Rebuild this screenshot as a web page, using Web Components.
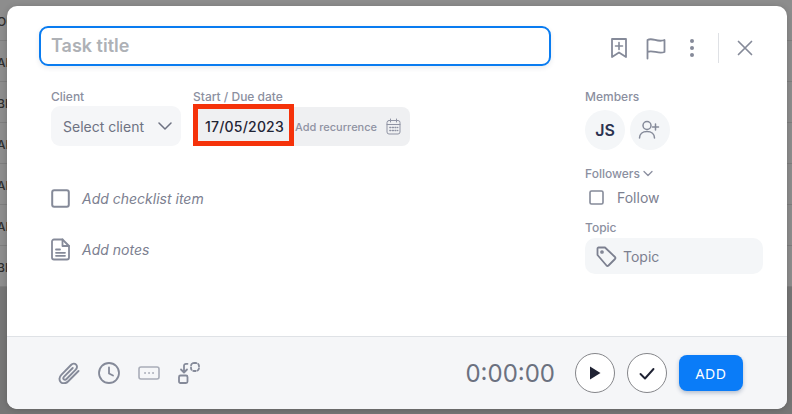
<!DOCTYPE html>
<html>
<head>
<meta charset="utf-8">
<style>
  html, body { margin: 0; padding: 0; overflow: hidden; }
  body { font-family: Inter, "Liberation Sans", sans-serif; }
</style>
</head>
<body>
<task-page></task-page>

<script>
// small wrapper so the stroke icons all share the same svg setup
const icon = (w, h, body, extra = '') =>
    `<svg width="${w}" height="${h}" viewBox="0 0 ${w} ${h}" fill="none" stroke="currentColor" stroke-linecap="round" stroke-linejoin="round" ${extra}>${body}</svg>`;

class BackdropTable extends HTMLElement {
    constructor() {
        super();
        this.attachShadow({ mode: 'open' });
        const labels = ['OC', 'AR', 'BE', 'AR', 'AR', 'AR', 'BE'];
        this.shadowRoot.innerHTML = `
            <style>
                :host { display: block; width: 792px; height: 414px; background: #767676; overflow: hidden; }
                .row {
                    height: 40px;
                    border-bottom: 1px solid #7e7e7e;
                    background: #8d8d8d;
                    color: #2e2e2e;
                    font: 500 12px/43px Inter, sans-serif;
                    white-space: nowrap;
                    overflow: hidden;
                    text-indent: -3px;
                }
                .row:first-child {
                    height: 41px;
                    line-height: 41px;
                    background: linear-gradient(#8e8e8e 0, #8c8c8c 60%, #808080 100%);
                }
            </style>
            ${labels.map(l => `<div class="row">${l}</div>`).join('')}
        `;
    }
}

class FieldLabel extends HTMLElement {
    constructor() {
        super();
        this.attachShadow({ mode: 'open' });
        this.shadowRoot.innerHTML = `
            <style>
                :host { display: flex; align-items: center; gap: 3px; height: 16px; font-size: 12px; font-weight: 500; color: #8b8f9f; }
            </style>
            <slot></slot>
        `;
    }
}

class IconAction extends HTMLElement {
    constructor() {
        super();
        this.attachShadow({ mode: 'open' });
        this.shadowRoot.innerHTML = `
            <style>
                :host { display: flex; align-items: center; justify-content: center; color: #858a99; }
                ::slotted(svg) { display: block; }
            </style>
            <slot></slot>
        `;
    }
}

class RoundButton extends HTMLElement {
    constructor() {
        super();
        this.attachShadow({ mode: 'open' });
        this.shadowRoot.innerHTML = `
            <style>
                :host {
                    display: flex; align-items: center; justify-content: center;
                    width: 40px; height: 40px; box-sizing: border-box;
                    border-radius: 50%; border: 1px solid #85868a;
                    background: #fff; color: #1f2233;
                }
            </style>
            <slot></slot>
        `;
    }
}

class MemberBubble extends HTMLElement {
    constructor() {
        super();
        this.attachShadow({ mode: 'open' });
        this.shadowRoot.innerHTML = `
            <style>
                :host {
                    display: flex; align-items: center; justify-content: center;
                    width: 40px; height: 40px; border-radius: 50%;
                    background: #f4f6f8; color: #2b3350;
                    font-size: 16px; font-weight: 600;
                }
            </style>
            <slot></slot>
        `;
    }
}

class CheckRow extends HTMLElement {
    constructor() {
        super();
        this.attachShadow({ mode: 'open' });
        this.shadowRoot.innerHTML = `
            <style>
                :host { display: flex; align-items: center; color: #7c8090; font-size: 14px; }
                .lead { flex: none; display: flex; align-items: center; color: #858a99; }
            </style>
            <span class="lead"><slot name="lead"></slot></span>
            <slot></slot>
        `;
    }
}

class DateField extends HTMLElement {
    constructor() {
        super();
        this.attachShadow({ mode: 'open' });
        this.shadowRoot.innerHTML = `
            <style>
                :host { display: block; position: relative; width: 217px; height: 39px; margin-top: 1px; background: #eff0f2; border-radius: 0 8px 8px 0; }
                .inner { display: flex; align-items: center; height: 100%; }
                .date { margin-left: 12px; width: 90px; font-size: 14px; font-weight: 500; letter-spacing: .2px; color: #1f2435; white-space: nowrap; }
                .rec { font-size: 11px; font-weight: 500; color: #8f93a3; white-space: nowrap; }
                .cal { margin-left: 9px; color: #8f93a3; display: flex; }
                /* red annotation drawn on top of the field */
                .mark { position: absolute; left: 0; top: -3px; width: 101px; height: 42px; box-sizing: border-box; border: 5px solid #f5320a; }
            </style>
            <div class="inner">
                <span class="date"><slot></slot></span>
                <span class="rec">Add recurrence</span>
                <span class="cal">${icon(15, 17, `
                    <rect x="1" y="2.5" width="13" height="13.5" rx="2"/>
                    <path d="M1 6.5h13M4.5 1v3M10.5 1v3"/>
                    <path stroke-width="1.3" stroke-dasharray="1 1.6" d="M3.8 9.5h8M3.8 12.5h8"/>`)}</span>
            </div>
            <div class="mark"></div>
        `;
    }
}

class TaskModal extends HTMLElement {
    constructor() {
        super();
        this.attachShadow({ mode: 'open' });
        this.shadowRoot.innerHTML = `
            <style>
                :host {
                    position: absolute; left: 7px; top: 6px;
                    display: flex; flex-direction: column;
                    width: 780px; height: 403px;
                    background: #fff; border-radius: 10px; overflow: hidden;
                    color: #7c8090;
                    box-shadow: 0 1px 6px rgba(0, 0, 0, .18);
                    font-family: Inter, "Liberation Sans", sans-serif;
                }
                .main { flex: 1; display: flex; flex-direction: column; padding: 20px 24px 0 32px; }
                .head { display: flex; align-items: flex-start; height: 40px; }
                .title {
                    width: 512px; height: 40px; box-sizing: border-box;
                    border: 2px solid #0a7cf0; border-radius: 9px;
                    padding: 0 0 1px 10px; display: flex; align-items: center;
                    font-size: 18px; font-weight: 600; color: #aeb1b6;
                    box-shadow: 0 2px 5px rgba(40, 60, 90, .1);
                }
                .tools { display: flex; align-items: center; height: 44px; margin-left: 59px; }
                .sep { width: 1px; height: 30px; background: #dfe1e5; }
                .cols { display: flex; padding-left: 12px; margin-top: 22px; }
                .left { width: 534px; }
                .right { width: 178px; }
                .dates { display: flex; }
                .stack { display: flex; flex-direction: column; gap: 2px; }
                .select {
                    display: flex; align-items: center; justify-content: space-between;
                    width: 130px; height: 40px; box-sizing: border-box; padding: 0 9px 0 12px;
                    background: #f5f6f8; border-radius: 9px;
                    font-size: 14px; color: #6e7282;
                }
                .checks { display: flex; flex-direction: column; gap: 30px; margin-top: 43px; font-style: italic; }
                .members { display: flex; gap: 5px; margin-top: 6px; }
                .topic {
                    display: flex; align-items: center; gap: 6px; margin-top: 3px;
                    height: 36px; padding-left: 11px; border-radius: 10px;
                    background: #f4f6f8; font-size: 14px;
                }
                .topic span { margin-top: 1px; }
                .foot {
                    display: flex; align-items: center; height: 72px;
                    border-top: 1px solid #dfe2e6; background: #f5f6f8;
                    padding-left: 51px;
                }
                .foot-icons { display: flex; gap: 18px; color: #878c9b; }
                .timer { margin-left: auto; font: 400 24px Inter, sans-serif; color: #6b7180; }
                .round { display: flex; gap: 12px; margin-left: 20px; }
                .add {
                    display: flex; align-items: center; justify-content: center;
                    width: 64px; height: 36px; margin: 0 44px 0 12px;
                    background: #0a7cf8; border-radius: 8px; color: #fff;
                    font: 400 14px "Noto Sans", sans-serif; letter-spacing: .6px;
                    box-shadow: 0 2px 4px rgba(30, 60, 110, .3);
                }
            </style>
            <div class="main">
                <div class="head">
                    <div class="title">Task title</div>
                    <div class="tools">
                        <icon-action style="width:18px">${icon(18, 22, `
                            <path stroke-width="1.8" d="M2 2h14v18l-7-4.5L2 20z"/>
                            <path stroke-width="1.6" d="M9 5.5v7M5.5 9h7"/>`)}</icon-action>
                        <icon-action style="width:21px;margin-left:17px">${icon(21, 24, `
                            <path stroke-width="1.8" d="M2.500 22.500V4c5-3 10 3 17 0v12c-6 2.500-12-2.500-17 0"/>`)}</icon-action>
                        <icon-action style="width:6px;margin-left:23px"><svg width="6" height="20" viewBox="0 0 6 20" fill="currentColor"><circle cx="3" cy="3" r="2"/><circle cx="3" cy="10" r="2"/><circle cx="3" cy="17" r="2"/></svg></icon-action>
                        <div class="sep" style="margin-left:23px"></div>
                        <icon-action style="width:16px;margin-left:18px">${icon(16, 16, `
                            <path stroke-width="1.7" d="M1.500 1.500l13 13M14.500 1.500l-13 13"/>`)}</icon-action>
                    </div>
                </div>
                <div class="cols">
                    <div class="left">
                        <div class="dates">
                            <div class="stack">
                                <field-label>Client</field-label>
                                <div class="select">Select client ${icon(14, 10, `<path stroke-width="1.500" d="M1 2l6 6 6-6"/>`)}</div>
                            </div>
                            <div class="stack" style="margin-left:12px">
                                <field-label>Start / Due date</field-label>
                                <date-field>17/05/2023</date-field>
                            </div>
                        </div>
                        <div class="checks">
                            <check-row>
                                <span slot="lead" style="width:31px;display:flex">${icon(19, 19, `<rect x="1.200" y="1.200" width="16.600" height="16.600" rx="2" stroke-width="2"/>`)}</span>
                                Add checklist item
                            </check-row>
                            <check-row>
                                <span slot="lead" style="width:31px;display:flex">${icon(19, 23, `
                                    <path stroke-width="1.800" d="M11.500 1.500H3a2 2 0 0 0-2 2v16a2 2 0 0 0 2 2h13a2 2 0 0 0 2-2V8z"/>
                                    <path stroke-width="1.800" d="M11.500 1.500V8H18M5 11.500h4M5 14.800h9M5 17.800h9"/>`)}</span>
                                Add notes
                            </check-row>
                        </div>
                    </div>
                    <div class="right">
                        <field-label>Members</field-label>
                        <div class="members">
                            <member-bubble>JS</member-bubble>
                            <member-bubble style="color:#858a99"><span style="display:flex;margin-left:-2px">${icon(22, 22, `
                                <circle cx="9" cy="6.500" r="4" stroke-width="1.500"/>
                                <path stroke-width="1.500" d="M1.500 19c0-4 3-6.500 7.500-6.500s7.500 2.500 7.500 6.500M17.500 5v6M14.500 8h6"/>`)}</span></member-bubble>
                        </div>
                        <field-label style="margin-top:15px">Followers ${icon(10, 7, `<path stroke-width="1.300" d="M1 1.500l4 4 4-4"/>`)}</field-label>
                        <check-row style="margin-top:7px;height:18px">
                            <span slot="lead" style="width:28px;padding-left:4px;display:flex">${icon(15, 15, `<rect x="1" y="1" width="13" height="13" rx="1.500" stroke-width="1.600"/>`)}</span>
                            Follow
                        </check-row>
                        <field-label style="margin-top:13px">Topic</field-label>
                        <div class="topic">${icon(21, 21, `
                            <path stroke-width="1.800" d="M1.500 2.500a1 1 0 0 1 1-1h6.500l10 9.500a1.500 1.500 0 0 1 0 2l-6.500 6.500a1.500 1.500 0 0 1-2 0L1.500 9z"/>
                            <circle cx="6" cy="6" r="1.100" stroke-width="1.500"/>`)}<span>Topic</span></div>
                    </div>
                </div>
            </div>
            <div class="foot">
                <div class="foot-icons">
                    <icon-action style="width:22px">${icon(22, 22, `
                        <path stroke-width="1.900" d="M20.500 9L10 19.500c-2.200 2.200-5.500 2.400-7.300.600s-1.600-5.100.600-7.300L13 3c1.500-1.500 3.800-1.700 5.100-.4s1.100 3.600-.4 5.100L8.500 17c-.8.800-2 1-2.700.3s-.5-1.900.3-2.700l8.600-8.600"/>`)}</icon-action>
                    <icon-action style="width:22px">${icon(22, 22, `
                        <circle cx="11" cy="11" r="10" stroke-width="1.800"/>
                        <path stroke-width="1.800" d="M11 5.500V11.500L15 13.500"/>`)}</icon-action>
                    <icon-action style="width:22px;color:#a9adb8">${icon(22, 14, `
                        <rect x="1" y="1" width="20" height="12" rx="2" stroke-width="1.600"/>
                        <path stroke-width="1.800" d="M7 7h.1M11 7h.1M15 7h.1"/>`)}</icon-action>
                    <icon-action style="width:22px">${icon(22, 22, `
                        <rect x="1" y="13.500" width="8.500" height="7.500" rx="1.500" stroke-width="1.800"/>
                        <path stroke-width="1.800" d="M9.500 1.800H8a2 2 0 0 0-2 2v6.500M3 7.500l3 3 3-3"/>
                        <rect x="13" y="1" width="8" height="8" rx="3" stroke-width="1.800" stroke-dasharray="2.500 2"/>`)}</icon-action>
                </div>
                <div class="timer">0:00:00</div>
                <div class="round">
                    <round-button><svg width="12" height="14" viewBox="0 0 12 14" fill="currentColor"><path d="M1 .5l10.500 6.500L1 13.500z"/></svg></round-button>
                    <round-button>${icon(16, 13, `<path stroke-width="1.900" d="M1.500 7l4.500 4.500L14.500 2"/>`)}</round-button>
                </div>
                <div class="add">ADD</div>
            </div>
        `;
    }
}

class TaskPage extends HTMLElement {
    constructor() {
        super();
        this.attachShadow({ mode: 'open' });
        this.shadowRoot.innerHTML = `
            <style>
                :host { display: block; position: relative; width: 792px; height: 414px; overflow: hidden; }
            </style>
            <backdrop-table></backdrop-table>
            <task-modal></task-modal>
        `;
    }
}

customElements.define('backdrop-table', BackdropTable);
customElements.define('field-label', FieldLabel);
customElements.define('icon-action', IconAction);
customElements.define('round-button', RoundButton);
customElements.define('member-bubble', MemberBubble);
customElements.define('check-row', CheckRow);
customElements.define('date-field', DateField);
customElements.define('task-modal', TaskModal);
customElements.define('task-page', TaskPage);
</script>
</body>
</html>
